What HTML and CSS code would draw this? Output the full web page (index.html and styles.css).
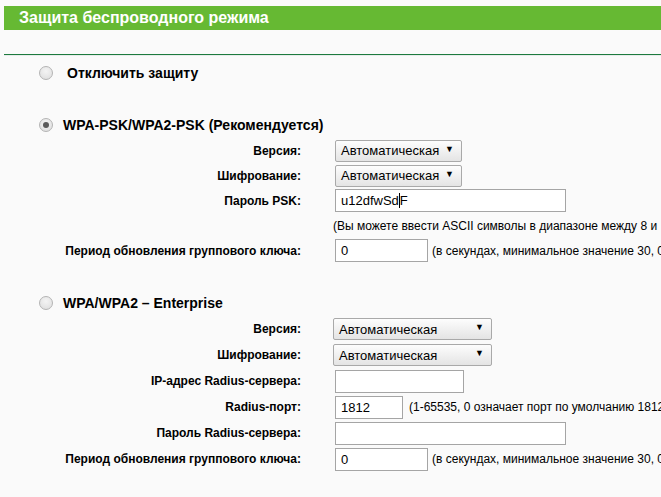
FILE: index.html
```html
<!DOCTYPE html>
<html lang="ru">
<head>
<meta charset="utf-8">
<title>Защита беспроводного режима</title>
<link rel="stylesheet" href="styles.css">
</head>
<body>
<div class="title-bar">Защита беспроводного режима</div>
<div class="divider"></div>

<div class="opt opt-first">
  <span class="radio"></span>
  <span class="opt-text opt-text-wide">Отключить защиту</span>
</div>

<div class="opt opt-gap">
  <span class="radio radio-on"></span>
  <span class="opt-text">WPA-PSK/WPA2-PSK (Рекомендуется)</span>
</div>

<div class="section sec-psk">
  <div class="row">
    <span class="label">Версия:</span>
    <div class="ctl"><span class="select sel-short"><span class="sel-val">Автоматическая</span><span class="arrow">▼</span></span></div>
  </div>
  <div class="row">
    <span class="label">Шифрование:</span>
    <div class="ctl"><span class="select sel-short"><span class="sel-val">Автоматическая</span><span class="arrow">▼</span></span></div>
  </div>
  <div class="row">
    <span class="label">Пароль PSK:</span>
    <div class="ctl"><span class="input in-long">u12dfwSd<span class="caret"></span>F</span></div>
  </div>
  <div class="row">
    <span class="label"></span>
    <div class="ctl ctl-hint"><span class="hint">(Вы можете ввести ASCII символы в диапазоне между 8 и</span></div>
  </div>
  <div class="row">
    <span class="label">Период обновления группового ключа:</span>
    <div class="ctl"><span class="input in-mid">0</span><span class="hint hint-after">(в секундах, минимальное значение 30, 0</span></div>
  </div>
</div>

<div class="opt opt-gap">
  <span class="radio"></span>
  <span class="opt-text">WPA/WPA2 – Enterprise</span>
</div>

<div class="section sec-ent">
  <div class="row">
    <span class="label">Версия:</span>
    <div class="ctl ctl-ent"><span class="select sel-long"><span class="sel-val">Автоматическая</span><span class="arrow">▼</span></span></div>
  </div>
  <div class="row">
    <span class="label">Шифрование:</span>
    <div class="ctl ctl-ent"><span class="select sel-long"><span class="sel-val">Автоматическая</span><span class="arrow">▼</span></span></div>
  </div>
  <div class="row">
    <span class="label">IP-адрес Radius-сервера:</span>
    <div class="ctl"><span class="input in-ip"></span></div>
  </div>
  <div class="row">
    <span class="label">Radius-порт:</span>
    <div class="ctl"><span class="input in-port">1812</span><span class="hint hint-port">(1-65535, 0 означает порт по умолчанию 1812</span></div>
  </div>
  <div class="row">
    <span class="label">Пароль Radius-сервера:</span>
    <div class="ctl"><span class="input in-long"></span></div>
  </div>
  <div class="row">
    <span class="label">Период обновления группового ключа:</span>
    <div class="ctl"><span class="input in-mid">0</span><span class="hint hint-after">(в секундах, минимальное значение 30, 0</span></div>
  </div>
</div>
</body>
</html>
```
FILE: styles.css
```css
html, body {
  margin: 0;
  padding: 0;
  background: #fafafa;
  overflow: hidden;
  font-family: "Liberation Sans", Arial, sans-serif;
  color: #000;
}

.title-bar {
  margin: 6px 0 0 4px;
  height: 24px;
  line-height: 24px;
  background: #66b933;
  color: #fff;
  font-weight: bold;
  font-size: 16px;
  padding-left: 15px;
  white-space: nowrap;
}

.divider {
  margin: 24px 0 0 4px;
  height: 1px;
  background: #1d7a3e;
  border-bottom: 1px solid #e6ecea;
}

.opt {
  display: flex;
  align-items: center;
  height: 24px;
  padding-left: 39px;
}
.opt-first { margin-top: 5px; }
.opt-gap { margin-top: 28px; }

.radio {
  width: 12px;
  height: 12px;
  border: 1px solid #b4b4b4;
  border-radius: 50%;
  background: radial-gradient(circle at 50% 35%, #f4f4f4 0%, #dcdcdc 100%);
  box-sizing: content-box;
  flex: none;
  display: flex;
  align-items: center;
  justify-content: center;
}
.radio-on::after {
  content: "";
  width: 6px;
  height: 6px;
  border-radius: 50%;
  background: #5a5a5a;
}

.opt-text {
  margin-left: 10px;
  font-weight: bold;
  font-size: 14px;
  white-space: nowrap;
}
.opt-text-wide { margin-left: 14px; }

.sec-psk { margin-top: 1px; }
.sec-psk .row { height: 25px; }
.sec-ent { margin-top: 1px; }
.sec-ent .row { height: 26px; }

.row {
  display: grid;
  grid-template-columns: 301px 1fr;
  column-gap: 34px;
  align-items: center;
}

.label {
  text-align: right;
  font-weight: bold;
  font-size: 12px;
  white-space: nowrap;
}

.ctl {
  display: flex;
  align-items: center;
  white-space: nowrap;
  min-width: 0;
}
.ctl-ent { margin-left: -2px; }
.ctl-hint { margin-left: -2px; }

.select {
  display: flex;
  align-items: center;
  justify-content: space-between;
  height: 22px;
  box-sizing: border-box;
  border: 1px solid #a9a9a9;
  border-radius: 2px;
  background: linear-gradient(#fdfdfd, #e4e4e4);
  padding: 0 7px 0 5px;
  font-size: 13px;
}
.sel-short { width: 127px; }
.sel-long { width: 159px; }
.arrow {
  font-size: 9px;
  line-height: 1;
  margin-top: -3px;
}

.input {
  display: flex;
  align-items: center;
  height: 23px;
  box-sizing: border-box;
  border: 1px solid #a5a5a5;
  background: #fff;
  padding-left: 5px;
  font-size: 13px;
  flex: none;
}
.in-long { width: 231px; }
.in-mid { width: 93px; }
.in-ip { width: 129px; }
.in-port { width: 68px; }

.caret {
  display: inline-block;
  width: 1px;
  height: 15px;
  background: #000;
}

.hint {
  font-size: 12px;
  white-space: nowrap;
}
.hint-after { margin-left: 4px; }
.hint-port { margin-left: 6px; }
```
